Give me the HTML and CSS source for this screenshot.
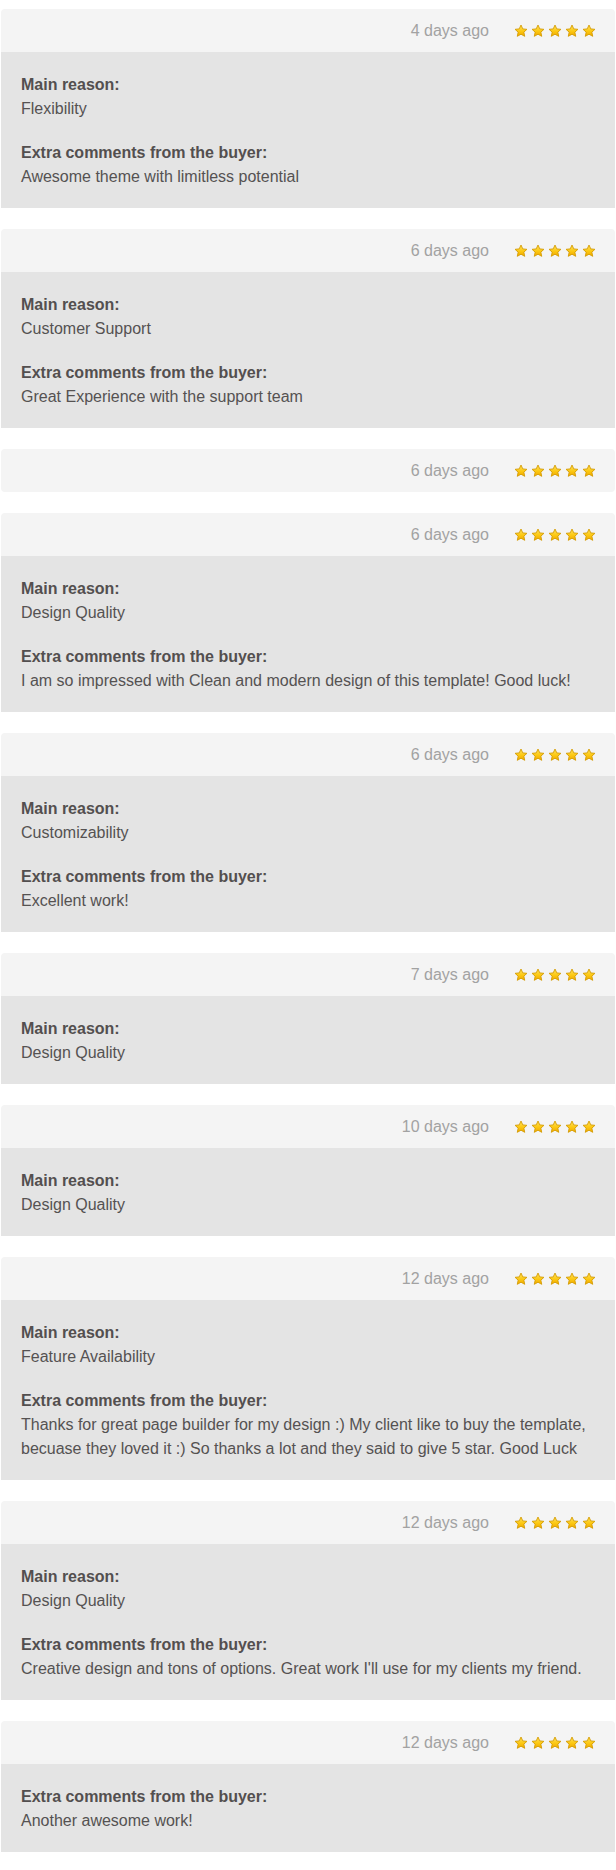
FILE: index.html
```html
<!DOCTYPE html>
<html lang="en">
<head>
<meta charset="utf-8">
<title>Reviews</title>
<link rel="stylesheet" href="styles.css">
</head>
<body>
<svg width="0" height="0" class="defs" aria-hidden="true">
  <defs>
    <linearGradient id="sg" x1="0" y1="0" x2="0" y2="1">
      <stop offset="0" stop-color="#ffe15a"/>
      <stop offset="0.55" stop-color="#fcc812"/>
      <stop offset="1" stop-color="#f0a800"/>
    </linearGradient>
    <symbol id="star" viewBox="0 0 16 16">
      <path d="M8 1.2 L10.05 5.6 L14.8 6.1 L11.25 9.3 L12.25 14.1 L8 11.65 L3.75 14.1 L4.75 9.3 L1.2 6.1 L5.95 5.6 Z" fill="url(#sg)" stroke="#d49a00" stroke-width="1" stroke-linejoin="round"/>
    </symbol>
  </defs>
</svg>
<div class="reviews">

  <div class="review">
    <div class="review-head">
      <span class="date">4 days ago</span>
      <span class="stars"><svg class="star"><use href="#star"/></svg><svg class="star"><use href="#star"/></svg><svg class="star"><use href="#star"/></svg><svg class="star"><use href="#star"/></svg><svg class="star"><use href="#star"/></svg></span>
    </div>
    <div class="review-body">
      <div class="section"><div class="label">Main reason:</div><div class="value">Flexibility</div></div>
      <div class="section"><div class="label">Extra comments from the buyer:</div><div class="value">Awesome theme with limitless potential</div></div>
    </div>
  </div>

  <div class="review">
    <div class="review-head">
      <span class="date">6 days ago</span>
      <span class="stars"><svg class="star"><use href="#star"/></svg><svg class="star"><use href="#star"/></svg><svg class="star"><use href="#star"/></svg><svg class="star"><use href="#star"/></svg><svg class="star"><use href="#star"/></svg></span>
    </div>
    <div class="review-body">
      <div class="section"><div class="label">Main reason:</div><div class="value">Customer Support</div></div>
      <div class="section"><div class="label">Extra comments from the buyer:</div><div class="value">Great Experience with the support team</div></div>
    </div>
  </div>

  <div class="review">
    <div class="review-head only">
      <span class="date">6 days ago</span>
      <span class="stars"><svg class="star"><use href="#star"/></svg><svg class="star"><use href="#star"/></svg><svg class="star"><use href="#star"/></svg><svg class="star"><use href="#star"/></svg><svg class="star"><use href="#star"/></svg></span>
    </div>
  </div>

  <div class="review">
    <div class="review-head">
      <span class="date">6 days ago</span>
      <span class="stars"><svg class="star"><use href="#star"/></svg><svg class="star"><use href="#star"/></svg><svg class="star"><use href="#star"/></svg><svg class="star"><use href="#star"/></svg><svg class="star"><use href="#star"/></svg></span>
    </div>
    <div class="review-body">
      <div class="section"><div class="label">Main reason:</div><div class="value">Design Quality</div></div>
      <div class="section"><div class="label">Extra comments from the buyer:</div><div class="value">I am so impressed with Clean and modern design of this template! Good luck!</div></div>
    </div>
  </div>

  <div class="review">
    <div class="review-head">
      <span class="date">6 days ago</span>
      <span class="stars"><svg class="star"><use href="#star"/></svg><svg class="star"><use href="#star"/></svg><svg class="star"><use href="#star"/></svg><svg class="star"><use href="#star"/></svg><svg class="star"><use href="#star"/></svg></span>
    </div>
    <div class="review-body">
      <div class="section"><div class="label">Main reason:</div><div class="value">Customizability</div></div>
      <div class="section"><div class="label">Extra comments from the buyer:</div><div class="value">Excellent work!</div></div>
    </div>
  </div>

  <div class="review">
    <div class="review-head">
      <span class="date">7 days ago</span>
      <span class="stars"><svg class="star"><use href="#star"/></svg><svg class="star"><use href="#star"/></svg><svg class="star"><use href="#star"/></svg><svg class="star"><use href="#star"/></svg><svg class="star"><use href="#star"/></svg></span>
    </div>
    <div class="review-body">
      <div class="section"><div class="label">Main reason:</div><div class="value">Design Quality</div></div>
    </div>
  </div>

  <div class="review">
    <div class="review-head">
      <span class="date">10 days ago</span>
      <span class="stars"><svg class="star"><use href="#star"/></svg><svg class="star"><use href="#star"/></svg><svg class="star"><use href="#star"/></svg><svg class="star"><use href="#star"/></svg><svg class="star"><use href="#star"/></svg></span>
    </div>
    <div class="review-body">
      <div class="section"><div class="label">Main reason:</div><div class="value">Design Quality</div></div>
    </div>
  </div>

  <div class="review">
    <div class="review-head">
      <span class="date">12 days ago</span>
      <span class="stars"><svg class="star"><use href="#star"/></svg><svg class="star"><use href="#star"/></svg><svg class="star"><use href="#star"/></svg><svg class="star"><use href="#star"/></svg><svg class="star"><use href="#star"/></svg></span>
    </div>
    <div class="review-body">
      <div class="section"><div class="label">Main reason:</div><div class="value">Feature Availability</div></div>
      <div class="section"><div class="label">Extra comments from the buyer:</div><div class="value">Thanks for great page builder for my design :) My client like to buy the template, becuase they loved it :) So thanks a lot and they said to give 5 star. Good Luck</div></div>
    </div>
  </div>

  <div class="review">
    <div class="review-head">
      <span class="date">12 days ago</span>
      <span class="stars"><svg class="star"><use href="#star"/></svg><svg class="star"><use href="#star"/></svg><svg class="star"><use href="#star"/></svg><svg class="star"><use href="#star"/></svg><svg class="star"><use href="#star"/></svg></span>
    </div>
    <div class="review-body">
      <div class="section"><div class="label">Main reason:</div><div class="value">Design Quality</div></div>
      <div class="section"><div class="label">Extra comments from the buyer:</div><div class="value">Creative design and tons of options. Great work I'll use for my clients my friend.</div></div>
    </div>
  </div>

  <div class="review">
    <div class="review-head">
      <span class="date">12 days ago</span>
      <span class="stars"><svg class="star"><use href="#star"/></svg><svg class="star"><use href="#star"/></svg><svg class="star"><use href="#star"/></svg><svg class="star"><use href="#star"/></svg><svg class="star"><use href="#star"/></svg></span>
    </div>
    <div class="review-body">
      <div class="section"><div class="label">Extra comments from the buyer:</div><div class="value">Another awesome work!</div></div>
    </div>
  </div>

</div>
</body>
</html>
```

FILE: styles.css
```css
html, body {
  margin: 0;
  padding: 0;
  background: #ffffff;
}

body {
  font-family: "Liberation Sans", Arial, Helvetica, sans-serif;
  font-size: 16px;
  line-height: 24px;
  color: #555252;
}

.defs {
  position: absolute;
  width: 0;
  height: 0;
  overflow: hidden;
}

.reviews {
  display: flex;
  flex-direction: column;
  gap: 21px;
  padding: 9px 1px 20px 1px;
}

.review {
  display: flex;
  flex-direction: column;
}

.review-head {
  height: 43px;
  display: flex;
  align-items: center;
  justify-content: flex-end;
  gap: 25px;
  padding-right: 19px;
  background: #f4f4f4;
  border-radius: 4px 4px 0 0;
}

.review-head.only {
  border-radius: 4px;
}

.date {
  color: #a2a2a2;
  font-size: 16px;
}

.stars {
  display: flex;
  gap: 3px;
  align-items: center;
}

.star {
  width: 14px;
  height: 14px;
  display: block;
}

.review-body {
  background: #e4e4e4;
  padding: 21px 20px 19px 20px;
  display: flex;
  flex-direction: column;
  gap: 20px;
}

.label {
  font-weight: bold;
  color: #534f4f;
}

.value {
  color: #555252;
}
```
